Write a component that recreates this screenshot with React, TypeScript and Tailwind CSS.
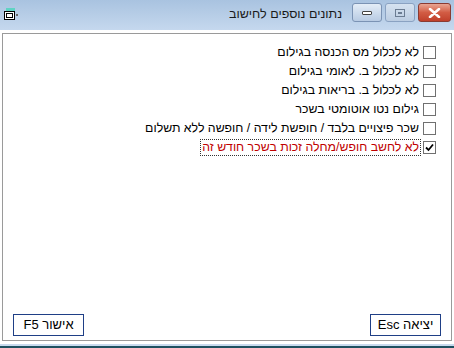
import React from "react";

const font = { fontFamily: '"Liberation Sans", Arial, sans-serif' };

function Check({ checked }: { checked?: boolean }) {
  return (
    <div className="w-[13px] h-[13px] border border-[#707070] bg-white flex items-center justify-center shrink-0">
      {checked && (
        <svg width="9" height="9" viewBox="0 0 9 9">
          <path d="M1 4.5 L3.5 7 L8 1.5" stroke="#000" strokeWidth="1.8" fill="none" />
        </svg>
      )}
    </div>
  );
}

function Row({ label, checked, red, focus }: { label: string; checked?: boolean; red?: boolean; focus?: boolean }) {
  return (
    <div className="flex flex-row-reverse items-center h-[19px] gap-[3px]">
      <Check checked={checked} />
      <span
        className={`text-[12.3px] leading-[15px] px-[1px] ${red ? "text-[#c00000]" : "text-black"} ${
          focus ? "outline outline-1 outline-dotted outline-[#333]" : ""
        }`}
        dir="rtl"
      >
        {label}
      </span>
    </div>
  );
}

export default function App() {
  return (
    <div className="w-[454px] h-[348px] bg-[#c8daee] flex flex-col relative overflow-hidden" style={font}>
      {/* title bar */}
      <div className="h-[30px] flex items-start bg-gradient-to-b from-[#a9c3e0] to-[#c5d8ee] shrink-0">
        <div className="w-[18px] h-[16px] mt-[8px] ml-[3px] relative">
          <svg width="18" height="14" viewBox="0 0 18 14">
            <rect x="3" y="0" width="9" height="3" fill="#5fd3c3" />
            <rect x="1.5" y="3.5" width="10" height="8" fill="#fff" stroke="#000" />
            <rect x="3.5" y="5.5" width="6" height="4" fill="none" stroke="#000" />
            <rect x="13" y="6" width="2" height="2" fill="#666" />
          </svg>
        </div>
        <div className="flex-1 flex justify-end pt-[6px] pr-[10px]">
          <span className="text-[12.5px] text-[#1a1a1a] leading-[16px]" dir="rtl">
            נתונים נוספים לחישוב
          </span>
        </div>
        <div className="flex mt-[3px] mr-[3px] gap-[3px]">
          <div className="w-[30px] h-[19px] rounded-[3px] border border-[#7b93b4] bg-gradient-to-b from-[#e4edf7] to-[#b8cbe3] flex items-center justify-center">
            <div className="w-[10px] h-[4px] border border-[#444] bg-white rounded-[1px]" />
          </div>
          <div className="w-[30px] h-[19px] rounded-[3px] border border-[#8aa2c2] bg-gradient-to-b from-[#d5e2f0] to-[#bccde2] flex items-center justify-center">
            <div className="w-[10px] h-[8px] border border-[#6b7c92] flex items-center justify-center">
              <div className="w-[4px] h-[2px] border border-[#6b7c92]" />
            </div>
          </div>
          <div className="w-[33px] h-[19px] rounded-[3px] border border-[#8a3b32] bg-gradient-to-b from-[#e8a593] via-[#d25c44] to-[#c0402b] flex items-center justify-center">
            <svg width="13" height="10" viewBox="0 0 13 10">
              <path d="M2 1 L11 9 M11 1 L2 9" stroke="#fff" strokeWidth="2.6" strokeLinecap="round" />
            </svg>
          </div>
        </div>
      </div>
      {/* client */}
      <div className="flex-1 bg-white mx-0 mb-[2px] px-[2px] pt-[3px] pb-[3px] flex">
        <div className="flex-1 border border-[#9a9a9a] flex flex-col">
          <div className="flex flex-col items-end pr-[15px] pt-[9px]">
            <Row label="לא לכלול מס הכנסה בגילום" />
            <Row label="לא לכלול ב. לאומי בגילום" />
            <Row label="לא לכלול ב. בריאות בגילום" />
            <Row label="גילום נטו אוטומטי בשכר" />
            <Row label="שכר פיצויים בלבד / חופשת לידה / חופשה ללא תשלום" />
            <Row label="לא לחשב חופש/מחלה זכות בשכר חודש זה" checked red focus />
          </div>
          <div className="flex-1" />
          <div className="flex justify-between px-[10px] pb-[4px]">
            <div className="w-[71px] h-[22px] border border-[#1f3f86] flex items-center justify-center text-[13px] text-black" dir="rtl">
              אישור F5
            </div>
            <div className="w-[71px] h-[22px] border border-[#1f3f86] flex items-center justify-center text-[13px] text-black" dir="rtl">
              יציאה Esc
            </div>
          </div>
        </div>
      </div>
      <div className="h-[2px] bg-[#1e5060] shrink-0" />
    </div>
  );
}
